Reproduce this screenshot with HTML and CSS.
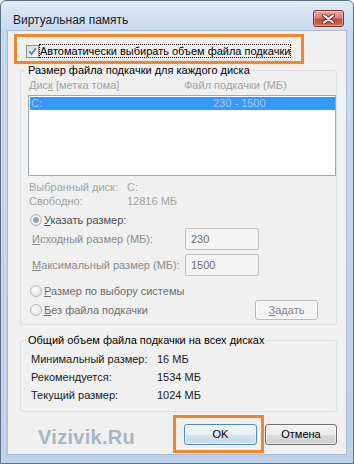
FILE: index.html
```html
<!DOCTYPE html>
<html lang="ru">
<head>
    <meta charset="UTF-8">
    <title>Виртуальная память</title>
    <link rel="stylesheet" href="styles.css">
</head>
<body>
<div class="window">
    <div class="titlebar">
        <span class="title">Виртуальная память</span>
        <span class="close">
            <svg width="13" height="10" viewBox="0 0 13 10">
                <path d="M2 1.5 L11 8.5 M11 1.5 L2 8.5" stroke="#6b241b" stroke-width="4" stroke-linecap="round"/>
                <path d="M2 1.5 L11 8.5 M11 1.5 L2 8.5" stroke="#fff" stroke-width="2.2" stroke-linecap="round"/>
            </svg>
        </span>
    </div>
    <div class="client">
        <div class="auto">
            <span class="check">
                <svg width="13" height="13" viewBox="0 0 13 13">
                    <path d="M3.2 6.3 L5.6 9.2 L9.8 3.2" fill="none" stroke="#5a78ae" stroke-width="1.7"/>
                </svg>
            </span>
            <span class="focus">Автоматически выбирать объем файла подкачки</span>
        </div>

        <fieldset class="group g1">
            <legend>Размер файла подкачки для каждого диска</legend>
            <div class="cols">
                <span class="c1">Дис<u>к</u> [метка тома]</span>
                <span>Файл подкачки (МБ)</span>
            </div>
            <div class="list">
                <div class="sel">
                    <span class="c1">C:</span>
                    <span>230 - 1500</span>
                </div>
            </div>
            <div class="info first"><span class="k">Выбранный диск:</span><span>C:</span></div>
            <div class="info"><span class="k">Свободно:</span><span>12816 МБ</span></div>

            <div class="radio on r1"><span class="dot"></span><span><u>У</u>казать размер:</span></div>
            <div class="field f1"><span class="lbl"><u>И</u>сходный размер (МБ):</span><span class="input">230</span></div>
            <div class="field f2"><span class="lbl"><u>М</u>аксимальный размер (МБ):</span><span class="input">1500</span></div>
            <div class="radio r2"><span class="dot"></span><span><u>Р</u>азмер по выбору системы</span></div>
            <div class="lastrow">
                <div class="radio"><span class="dot"></span><span><u>Б</u>ез файла подкачки</span></div>
                <span class="btn dis"><u>З</u>адать</span>
            </div>
        </fieldset>

        <fieldset class="group g2">
            <legend>Общий объем файла подкачки на всех дисках</legend>
            <div class="sum first"><span class="k">Минимальный размер:</span><span>16 МБ</span></div>
            <div class="sum"><span class="k">Рекомендуется:</span><span>1534 МБ</span></div>
            <div class="sum"><span class="k">Текущий размер:</span><span>1024 МБ</span></div>
        </fieldset>

        <div class="footer">
            <span class="mark">Vizivik.Ru</span>
            <div class="okwrap"><span class="btn ok">OK</span></div>
            <span class="btn cancel">Отмена</span>
        </div>
    </div>
</div>
</body>
</html>
```

FILE: styles.css
```css
*{
    margin: 0;
    padding: 0;
    box-sizing: border-box;
}
body{
    width: 354px;
    height: 464px;
    font: 11px/13px "Liberation Sans", Arial, sans-serif;
    color: #000;
    background: #fff;
}
.window{
    width: 354px;
    height: 464px;
    border: 1px solid #5b6f87;
    border-radius: 6px 6px 0 0;
    background: linear-gradient(#dfeaf6 0, #c7daef 30px, #bcd2ea 100%);
    display: flex;
    flex-direction: column;
}
.titlebar{
    height: 30px;
    display: flex;
    align-items: flex-start;
    padding: 12px 9px 0 12px;
}
.title{
    font-size: 12px;
    line-height: 14px;
    color: #1b1b1b;
}
.close{
    margin-left: auto;
    margin-top: -3px;
    width: 31px;
    height: 17px;
    border: 1px solid #7d3229;
    border-radius: 3px;
    background: linear-gradient(#e9aba1 0, #d9806f 45%, #c24a36 55%, #d46f5a 100%);
    box-shadow: inset 0 0 0 1px rgba(255,255,255,0.35);
    display: flex;
    align-items: center;
    justify-content: center;
}
.client{
    flex: 1;
    margin: 0 7px 9px;
    background: #f0f0f0;
    box-shadow: 0 0 0 1px #a8bcd3;
    padding-top: 3px;
}

/* checkbox row */
.auto{
    margin-left: 6px;
    width: 290px;
    height: 30px;
    border: 3px solid #f0862d;
    display: flex;
    align-items: center;
    padding: 4px 0 0 9px;
}
.check{
    width: 13px;
    height: 13px;
    border: 1px solid #8e8f8f;
    background: linear-gradient(135deg, #dcdcdc, #fbfbfb);
    display: flex;
}
.check svg{
    margin: -1px;
}
.focus{
    border: 1px dotted #000;
    line-height: 12px;
    padding-right: 0;
}

/* group boxes */
.group{
    margin-left: 12px;
    width: 317px;
    border: 1px solid #d5dfe5;
    border-radius: 3px;
    padding: 0 0 4px;
}
legend{
    margin-left: 6px;
    padding: 0 1px;
    line-height: 13px;
}
.cols{
    display: flex;
    margin-top: 2px;
    padding-left: 8px;
    color: #a3a3a3;
}
.cols .c1{
    width: 155px;
}
.list{
    margin: 3px 0 0 7px;
    width: 308px;
    height: 81px;
    border: 1px solid #a2a7ab;
    background: #fff;
    padding: 1px 0 0 1px;
}
.sel{
    display: flex;
    height: 13px;
    background: #3399ff;
    color: #a9c6e8;
    padding-left: 1px;
}
.sel .c1{
    width: 182px;
}
.info{
    display: flex;
    padding-left: 8px;
    line-height: 14px;
    color: #a3a3a3;
}
.info.first{
    margin-top: 4px;
}
.info .k{
    width: 98px;
}
.radio{
    display: flex;
    align-items: center;
    padding-left: 9px;
    line-height: 14px;
    color: #6d6d6d;
}
.radio.on{
    color: #4d4d4d;
}
.r1{
    margin-top: 5px;
}
.r2{
    margin-top: 8px;
}
.dot{
    width: 12px;
    height: 12px;
    margin-right: 2px;
    border-radius: 50%;
    border: 1px solid #b8b8b8;
    background: radial-gradient(circle at 40% 40%, #fdfdfd, #dedede);
}
.on .dot{
    background: radial-gradient(circle, #8f9498 0, #a7abae 2.5px, #f4f4f4 3.5px, #e2e2e2 5px);
}
.field{
    display: flex;
    align-items: center;
    height: 22px;
    padding-left: 11px;
    color: #8a8a8a;
}
.f1{
    margin-top: 1px;
}
.f2{
    margin-top: 4px;
}
.lbl{
    width: 153px;
}
.input{
    width: 74px;
    height: 22px;
    border: 1px solid #c2c2c2;
    border-radius: 2px;
    background: #f4f4f4;
    padding-left: 5px;
    line-height: 20px;
    color: #6d6d6d;
}
.lastrow{
    display: flex;
    align-items: center;
    height: 20px;
    margin-top: 2px;
}
.btn{
    display: flex;
    align-items: center;
    justify-content: center;
    width: 72px;
    height: 21px;
    border: 1px solid #707070;
    border-radius: 3px;
    background: linear-gradient(#f2f2f2 0, #ebebeb 50%, #dddddd 50%, #cfcfcf 100%);
    box-shadow: inset 0 0 0 1px rgba(255,255,255,0.6);
}
.btn.dis{
    margin-left: auto;
    margin-right: 18px;
    width: 63px;
    height: 20px;
    border-color: #b5b9bc;
    background: #f4f4f4;
    color: #838383;
}
.g2{
    margin-top: 9px;
    padding-bottom: 7px;
}
.sum{
    display: flex;
    padding-left: 10px;
    line-height: 18px;
    color: #1a1a1a;
}
.sum.first{
    margin-top: 3px;
}
.sum .k{
    width: 126px;
}

/* bottom buttons */
.footer{
    display: flex;
    align-items: flex-start;
    margin-top: 3px;
    padding: 0 9px 0 30px;
}
.mark{
    margin-top: 12px;
    font: bold 20px/20px "Liberation Sans", Arial, sans-serif;
    letter-spacing: 0.3px;
    color: #a6b7c1;
}
.okwrap{
    margin-left: auto;
    border: 3px solid #f0862d;
    padding: 6px 4px 5px 8px;
}
.btn.ok{
    width: 73px;
    border-color: #4a8cc0;
    background: linear-gradient(#f1f7fb 0, #e6f0f6 50%, #d4e4ef 50%, #c6dbe9 100%);
}
.btn.cancel{
    margin-left: 1px;
    margin-top: 9px;
}
```
